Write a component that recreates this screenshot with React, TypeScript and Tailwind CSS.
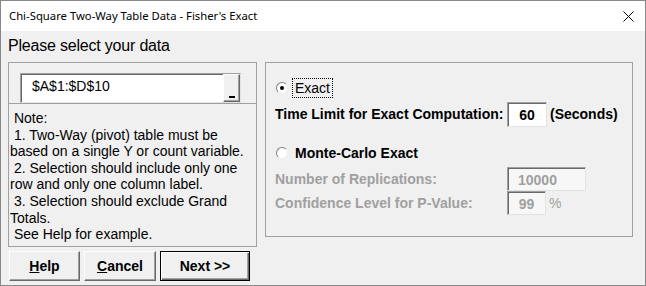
import React from 'react';

const noteLines = [
  ' Note:',
  ' 1. Two-Way (pivot) table must be',
  'based on a single Y or count variable.',
  ' 2. Selection should include only one',
  'row and only one column label.',
  ' 3. Selection should exclude Grand',
  'Totals.',
  ' See Help for example.',
];

const sunken =
  'bg-white border border-t-[#a0a0a0] border-l-[#a0a0a0] border-b-[#e3e3e3] border-r-[#e3e3e3] shadow-[inset_1px_1px_0_#696969]';

const raised =
  'bg-[#f0f0f0] border border-t-white border-l-white border-b-[#696969] border-r-[#696969] shadow-[inset_-1px_-1px_0_#a0a0a0]';

const Radio: React.FC<{ checked?: boolean }> = ({ checked }) => (
  <span className="w-[12px] h-[12px] rounded-full bg-white border border-t-[#808080] border-l-[#808080] border-b-[#f0f0f0] border-r-[#f0f0f0] flex items-center justify-center shrink-0">
    {checked && <span className="w-[4px] h-[4px] rounded-full bg-black" />}
  </span>
);

const App: React.FC = () => {
  return (
    <div
      className="w-[646px] h-[286px] border border-[#888888] bg-[#f0f0f0] flex flex-col text-black overflow-hidden"
      style={{ fontFamily: '"Liberation Sans", Arial, sans-serif' }}
    >
      {/* title bar */}
      <div className="h-[30px] bg-white flex items-center justify-between pl-[8px] pr-[10px] shrink-0">
        <span className="text-[11.3px]" style={{ fontFamily: '"Noto Sans", "Liberation Sans", sans-serif' }}>
          Chi-Square Two-Way Table Data - Fisher's Exact
        </span>
        <svg width="11" height="11" viewBox="0 0 11 11" className="mr-[1px]">
          <path d="M0.5 0.5 L10.5 10.5 M10.5 0.5 L0.5 10.5" stroke="#000" strokeWidth="1" />
        </svg>
      </div>

      {/* body */}
      <div className="flex-1 pl-[7px]">
        <div className="mt-[6px] h-[18px] leading-[18px] text-[16px] tracking-[-0.2px]">Please select your data</div>

        <div className="mt-[7px] flex items-start">
          {/* left column */}
          <div className="w-[249px] flex flex-col">
            <div className="h-[185px] border border-[#a0a0a0] flex flex-col">
              <div className="h-[41px] border-b border-[#a0a0a0] pl-[11px] pt-[10px] shrink-0">
                <div className={`flex w-[221px] h-[30px] ${sunken}`}>
                  <div className="flex-1 pl-[11px] pt-[4px] text-[14px] leading-[16px]">$A$1:$D$10</div>
                  <div className={`w-[17px] h-[28px] flex items-end justify-center pb-[3px] ${raised}`}>
                    <span className="w-[6px] h-[2px] bg-black" />
                  </div>
                </div>
              </div>
              <div className="pl-[1px] pt-[6px] text-[14px] leading-[16.6px]">
                {noteLines.map((l, i) => (
                  <div key={i} className="whitespace-pre">
                    {l}
                  </div>
                ))}
              </div>
            </div>

            <div className="mt-[4px] flex gap-[4px] pl-[1px]">
              <button className={`w-[71px] h-[30px] text-[14px] font-bold ${raised}`}>
                <u>H</u>elp
              </button>
              <button className={`w-[72px] h-[30px] text-[14px] font-bold ${raised}`}>
                <u>C</u>ancel
              </button>
              <button className="w-[90px] h-[30px] text-[14px] font-bold bg-[#f0f0f0] border border-black shadow-[inset_1px_1px_0_#ffffff,inset_-1px_-1px_0_#696969,inset_-2px_-2px_0_#a0a0a0]">
                Next &gt;&gt;
              </button>
            </div>
          </div>

          {/* right panel */}
          <div className="ml-[8px] w-[368px] h-[175px] border border-[#a0a0a0] text-[14px]">
            <div className="mt-[15px] h-[20px] flex items-center pl-[10px]">
              <Radio checked />
              <span className="ml-[4px] h-[20px] px-[2px] border border-dotted border-black flex items-center">
                Exact
              </span>
            </div>

            <div className="mt-[4px] h-[25px] flex items-center pl-[9px] font-bold">
              <span className="w-[232px]">Time Limit for Exact Computation:</span>
              <span className={`w-[40px] h-[25px] flex items-center justify-center pt-[2px] ${sunken}`}>60</span>
              <span className="ml-[3px]">(Seconds)</span>
            </div>

            <div className="mt-[16px] h-[20px] flex items-center pl-[10px] font-bold">
              <Radio />
              <span className="ml-[7px]">Monte-Carlo Exact</span>
            </div>

            <div className="mt-[4px] h-[24px] flex items-center pl-[9px] font-bold text-[#a0a0a0]">
              <span className="w-[232px]">Number of Replications:</span>
              <span className={`w-[79px] h-[24px] flex items-center pl-[10px] pt-[2px] !bg-[#f7f7f7] ${sunken}`}>10000</span>
            </div>

            <div className="mt-[0px] h-[24px] flex items-center pl-[9px] font-bold text-[#a0a0a0]">
              <span className="w-[232px]">Confidence Level for P-Value:</span>
              <span className={`w-[39px] h-[24px] flex items-center justify-center pt-[2px] !bg-[#f7f7f7] ${sunken}`}>99</span>
              <span className="ml-[3px] font-normal">%</span>
            </div>
          </div>
        </div>
      </div>
    </div>
  );
};

export default App;
